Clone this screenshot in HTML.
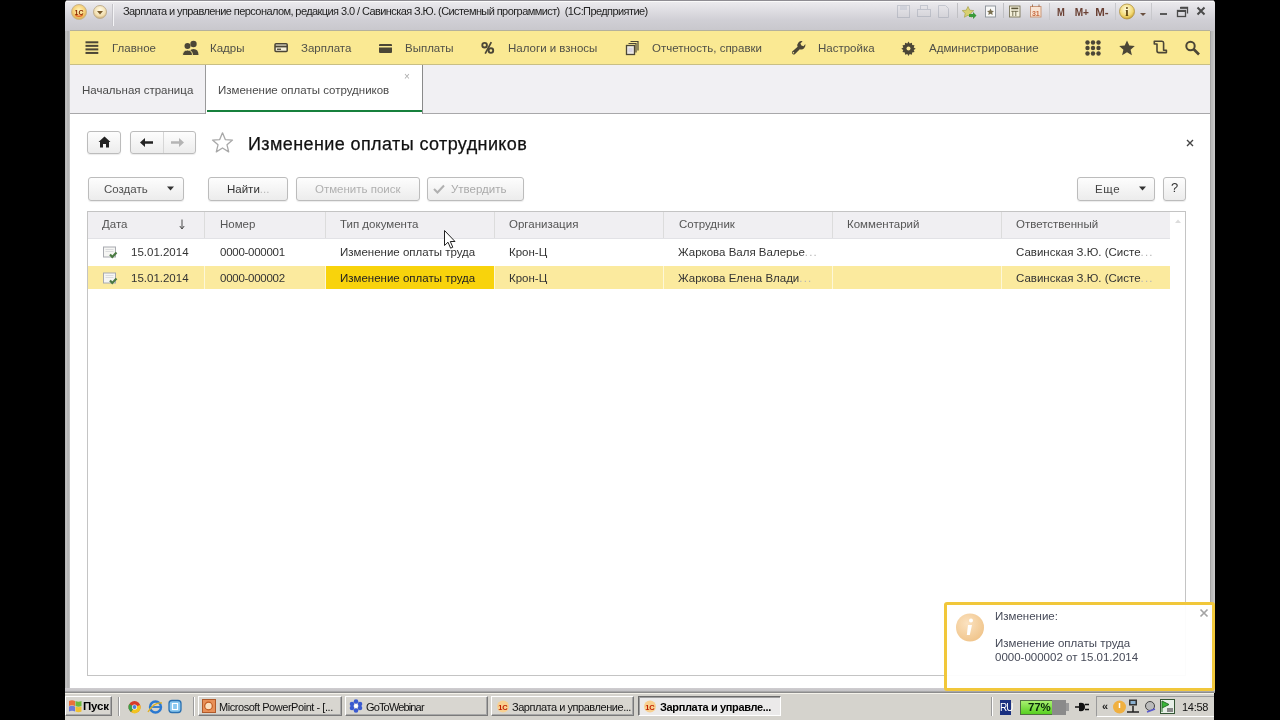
<!DOCTYPE html>
<html><head><meta charset="utf-8">
<style>
*{box-sizing:border-box;margin:0;padding:0}
.t,.xt,svg text{-webkit-font-smoothing:antialiased}
html,body{width:1280px;height:720px;overflow:hidden;background:#000;font-family:"Liberation Sans",sans-serif;color:#333}
.a{position:absolute}
.t{position:absolute;white-space:nowrap;font-size:11.5px;line-height:14px}
#win{position:absolute;left:65px;top:0;width:1150px;height:693px;background:linear-gradient(to right,#a4a4a4 0,#c8c8c8 1px,#b6b6b6 2px,#b4b4b4 4px,#d0d0d0 5px,#d0d0d0 1145px,#909090 1145px,#b8b8b8 1146px,#bcbcbc 1148px,#c8c8c8 1149px);border-radius:4px 4px 0 0}
#title{position:absolute;left:0;top:0;width:1150px;height:31px;border-radius:4px 4px 0 0;background:linear-gradient(#eeedf0 0,#e0dfe4 30%,#d0cfd5 65%,#c8c7cc 100%)}
#nav{position:absolute;left:70px;top:31px;width:1140px;height:34px;background:#fae993;border-bottom:1px solid #c9bf84}
#tabs{position:absolute;left:70px;top:65px;width:1140px;height:49px;background:#f1f0f3;border-bottom:1px solid #a8a8aa}
#content{position:absolute;left:70px;top:114px;width:1140px;height:574px;background:#fff}
#taskbar{position:absolute;left:65px;top:693px;width:1149px;height:27px;background:#d5d3cd;border-top:1px solid #f4f2ea}
.btn{position:absolute;border:1px solid #bcbcbc;border-radius:3px;background:linear-gradient(#fdfdfd,#ececec);box-shadow:0 1px 1px rgba(0,0,0,.08)}
.hdr{position:absolute;top:212px;height:27px;background:#f0eff2}
.vl{position:absolute;width:1px;background:#dcdcdc}
</style></head>
<body><div style="position:absolute;left:0;top:0;width:1280px;height:720px;will-change:transform">
<div id="win"></div>

<div id="title" class="a" style="left:65px"></div>
<div class="a" style="left:67px;top:0;width:1146px;height:1px;background:#8e8c92"></div>
<div class="a" style="left:66px;top:1px;width:1148px;height:1px;background:#fafafa"></div>
<div class="a" style="left:70px;top:30px;width:1140px;height:1px;background:#b4b19c"></div>
<svg class="a" style="left:70px;top:3px" width="18" height="18" viewBox="0 0 18 18">
 <defs><radialGradient id="g1c" cx="50%" cy="40%" r="60%"><stop offset="0" stop-color="#fff6c0"/><stop offset=".6" stop-color="#f7d27a"/><stop offset="1" stop-color="#d9a84a"/></radialGradient></defs>
 <circle cx="9" cy="9" r="7.5" fill="url(#g1c)" stroke="#c9b48a" stroke-width="1"/>
 <text x="9" y="11.5" font-family="Liberation Sans" font-weight="bold" font-size="7" text-anchor="middle" fill="#8a2a00">1С</text>
 <path d="M5.5 12.5 Q9 14 12.5 12.5" stroke="#e04010" stroke-width="1.2" fill="none"/>
</svg>
<svg class="a" style="left:92px;top:4px" width="16" height="16" viewBox="0 0 16 16">
 <defs><radialGradient id="gdd" cx="50%" cy="35%" r="65%"><stop offset="0" stop-color="#fffbe8"/><stop offset=".7" stop-color="#f2dfb0"/><stop offset="1" stop-color="#c8a870"/></radialGradient></defs>
 <circle cx="8" cy="8" r="6.5" fill="url(#gdd)" stroke="#bfae90" stroke-width="1"/>
 <path d="M5 7 L11 7 L8 10.5 Z" fill="#7a5a2a"/>
</svg>
<div class="a" style="left:112px;top:4px;width:1px;height:22px;background:#c4c3c8"></div>
<div class="a" style="left:113px;top:4px;width:1px;height:22px;background:#f4f4f6"></div>
<div class="t" style="left:123px;top:4px;font-size:11px;letter-spacing:-0.58px;color:#222">Зарплата и управление персоналом, редакция 3.0 / Савинская З.Ю. (Системный программист)&nbsp; (1С:Предприятие)</div>
<!-- right title icons -->
<svg class="a" style="left:895px;top:2px" width="320" height="20" viewBox="0 0 320 20">
 <g opacity=".35" fill="none" stroke="#8890a0" stroke-width="1">
  <rect x="2.5" y="3.5" width="12" height="12"/><rect x="5" y="4" width="7" height="4" fill="#b0b8c8" stroke="none"/>
  <rect x="22.5" y="7.5" width="13" height="7"/><rect x="25.5" y="3.5" width="7" height="4"/>
  <path d="M43.5 3.5 h7 l3 3 v9 h-10 z"/>
 </g>
 <line x1="62.5" y1="1" x2="62.5" y2="16" stroke="#c0c0c4"/>
 <path d="M73 4.5 L74.8 8.2 L78.8 8.6 L75.8 11.3 L76.6 15.3 L73 13.2 L69.4 15.3 L70.2 11.3 L67.2 8.6 L71.2 8.2 Z" fill="#d8d070" stroke="#a09a40" stroke-width=".6"/>
 <path d="M74 12 L78 12 L78 10 L81.5 13.5 L78 17 L78 15 L74 15 Z" fill="#3a9a3a"/>
 <rect x="90.5" y="4" width="10" height="11" fill="#f8f8f8" stroke="#8a9098" stroke-width=".9"/>
 <path d="M95.5 6.5 L96.6 8.7 L99 9 L97.2 10.6 L97.7 13 L95.5 11.8 L93.3 13 L93.8 10.6 L92 9 L94.4 8.7 Z" fill="#7a7050"/>
 <line x1="108.5" y1="1" x2="108.5" y2="16" stroke="#c0c0c4"/>
 <rect x="114.5" y="4" width="10.5" height="11" fill="#f4f0dc" stroke="#7a7458" stroke-width=".9"/>
 <rect x="116.3" y="5.6" width="7" height="1.6" fill="#5a5438"/>
 <path d="M116.3 9.3 h7 M117.8 9 v5 M120.8 9 v5" stroke="#6a6448" stroke-width=".9"/>
 <rect x="135.5" y="4.5" width="10.5" height="10.5" fill="#f8e4d4" stroke="#c89070" stroke-width=".9"/>
 <text x="140.8" y="13.5" font-family="Liberation Sans" font-size="7" font-weight="bold" text-anchor="middle" fill="#c86a40">31</text>
 <path d="M137.5 2.5 v2.5 M144 2.5 v2.5" stroke="#a07050" stroke-width=".9"/>
 <line x1="154.5" y1="1" x2="154.5" y2="18" stroke="#c8c8cc"/>
 <text x="162" y="13.6" font-family="Liberation Sans" font-size="11.5" font-weight="bold" textLength="7.8" lengthAdjust="spacingAndGlyphs" fill="#6a4034">M</text>
 <text x="179.7" y="13.6" font-family="Liberation Sans" font-size="11.5" font-weight="bold" textLength="14.3" lengthAdjust="spacingAndGlyphs" fill="#6a4034">M+</text>
 <text x="200.3" y="13.6" font-family="Liberation Sans" font-size="11.5" font-weight="bold" textLength="13.4" lengthAdjust="spacingAndGlyphs" fill="#6a4034">M-</text>
 <line x1="220.5" y1="1" x2="220.5" y2="18" stroke="#c8c8cc"/>
 <defs><radialGradient id="gi" cx="45%" cy="35%" r="65%"><stop offset="0" stop-color="#fffce0"/><stop offset=".7" stop-color="#f2d870"/><stop offset="1" stop-color="#c8a030"/></radialGradient></defs>
 <circle cx="232" cy="9.5" r="7.5" fill="url(#gi)" stroke="#b09040" stroke-width=".8"/>
 <text x="232" y="14" font-family="Liberation Serif" font-size="12" font-weight="bold" text-anchor="middle" fill="#5a4010">i</text>
 <path d="M245 11 h6 l-3 3 z" fill="#6a5040"/>
 <line x1="256.5" y1="1" x2="256.5" y2="18" stroke="#c8c8cc"/>
 <rect x="265" y="11" width="7" height="2" fill="#5a5a5a"/>
 <rect x="282.5" y="8.5" width="8" height="6" fill="none" stroke="#4a4a4a" stroke-width="1.3"/><rect x="282" y="8" width="9" height="2" fill="#4a4a4a"/>
 <path d="M285.5 5.5 h7 v6" fill="none" stroke="#4a4a4a" stroke-width="1.3"/><rect x="285" y="5" width="8" height="1.8" fill="#4a4a4a"/>
 <path d="M302.5 5.5 L309.5 12.5 M309.5 5.5 L302.5 12.5" stroke="#4a4a4a" stroke-width="2"/>
</svg>

<div id="nav"></div>
<svg class="a" style="left:70px;top:31px" width="1140" height="34" viewBox="70 31 1140 34">
 <g fill="#4b4636">
  <rect x="85.5" y="41.3" width="12.8" height="2"/><rect x="85.5" y="44.85" width="12.8" height="2"/><rect x="85.5" y="48.4" width="12.8" height="2"/><rect x="85.5" y="51.95" width="12.8" height="2"/>
  <circle cx="193.5" cy="44" r="3.2"/><path d="M188.5 55 q0 -6 5 -6 q5 0 5 6 z"/>
  <circle cx="187.5" cy="46" r="3"/><path d="M182.5 55.5 q0 -5.5 5 -5.5 q5 0 5 5.5 z" stroke="#fae993" stroke-width="1"/>
  <rect x="275" y="43.8" width="12.2" height="7.8" rx="1" fill="#f4efd8" stroke="#4b4636" stroke-width="1.5"/><rect x="275" y="45.6" width="12.2" height="1.8"/><rect x="277" y="48.6" width="4" height="1.3"/>
  <rect x="379" y="44" width="13" height="9" rx="1"/><rect x="379" y="46" width="13" height="1.5" fill="#fae993"/>
  <circle cx="484.6" cy="45.2" r="2.3" fill="none" stroke="#4b4636" stroke-width="1.9"/><circle cx="490.9" cy="50.6" r="2.3" fill="none" stroke="#4b4636" stroke-width="1.9"/><path d="M491.3 42.2 L485.2 53.6" stroke="#4b4636" stroke-width="1.7"/>
  <rect x="626.5" y="45.5" width="8" height="9" fill="#ebe8e2" stroke="#4b4636" stroke-width="1.3"/><path d="M628.5 43.5 h7.5 v9 M630.5 41.5 h7.5 v9" fill="none" stroke="#4b4636" stroke-width="1.2"/><rect x="628.5" y="48" width="4" height="4" fill="#d8d4e0"/>
  <path d="M792 51.8 L797.6 46.8 A4.3 4.3 0 0 1 802.6 41.2 L800.4 43.6 L801.4 45.6 L803.6 46.3 L805.3 44 A4.3 4.3 0 0 1 799.8 49.2 L794.8 54.2 A2 2 0 0 1 792 51.8 Z"/><circle cx="793.4" cy="52.8" r=".8" fill="#fae993"/>
  <path d="M908.5 41.5 l1.2 2 2.2 -.8 .3 2.3 2.3 .3 -.8 2.2 2 1.2 -2 1.2 .8 2.2 -2.3 .3 -.3 2.3 -2.2 -.8 -1.2 2 -1.2 -2 -2.2 .8 -.3 -2.3 -2.3 -.3 .8 -2.2 -2 -1.2 2 -1.2 -.8 -2.2 2.3 -.3 .3 -2.3 2.2 .8 z"/>
  <circle cx="908.5" cy="48.5" r="2" fill="#fae993"/>
  <g><circle cx="1087.5" cy="42.5" r="2.2"/><circle cx="1093" cy="42.5" r="2.2"/><circle cx="1098.5" cy="42.5" r="2.2"/>
  <circle cx="1087.5" cy="48" r="2.2"/><circle cx="1093" cy="48" r="2.2"/><circle cx="1098.5" cy="48" r="2.2"/>
  <circle cx="1087.5" cy="53.5" r="2.2"/><circle cx="1093" cy="53.5" r="2.2"/><circle cx="1098.5" cy="53.5" r="2.2"/></g>
  <path d="M1127 40.5 L1129.3 45.6 L1134.8 46.1 L1130.6 49.7 L1131.9 55.2 L1127 52.3 L1122.1 55.2 L1123.4 49.7 L1119.2 46.1 L1124.7 45.6 Z"/>
  <path d="M1157 44 H1154.3 V41.3 H1162 Q1163.6 41.3 1163.6 43 V50.2 H1166.4 V52.6 H1158.8 Q1157 52.6 1157 50.8 Z" fill="none" stroke="#4b4636" stroke-width="1.6" stroke-linejoin="round"/>
  <circle cx="1190.5" cy="46" r="4.2" fill="none" stroke="#4b4636" stroke-width="2"/><path d="M1193.5 49 L1199 54.5" stroke="#4b4636" stroke-width="2.6"/>
 </g>
</svg>
<div class="t" style="left:112px;top:41px;color:#505048">Главное</div>
<div class="t" style="left:210px;top:41px;color:#505048">Кадры</div>
<div class="t" style="left:301px;top:41px;color:#505048">Зарплата</div>
<div class="t" style="left:405px;top:41px;color:#505048">Выплаты</div>
<div class="t" style="left:508px;top:41px;color:#505048">Налоги и взносы</div>
<div class="t" style="left:652px;top:41px;color:#505048">Отчетность, справки</div>
<div class="t" style="left:818px;top:41px;color:#505048">Настройка</div>
<div class="t" style="left:929px;top:41px;color:#505048">Администрирование</div>

<div id="tabs"></div>
<div class="a" style="left:205px;top:65px;width:218px;height:49px;background:#fff;border-left:1px solid #9a9a9a;border-right:1px solid #8a8a8a"></div>
<div class="a" style="left:207px;top:110px;width:215px;height:2px;background:#17803c"></div>
<div class="t" style="left:82px;top:83px;color:#4a4a4a">Начальная страница</div>
<div class="t" style="left:218px;top:83px;color:#4a4a4a">Изменение оплаты сотрудников</div>
<div class="t" style="left:404px;top:70px;font-size:10px;color:#aaa">×</div>

<div id="content"></div>
<!-- home / nav buttons -->
<div class="btn" style="left:87px;top:131px;width:34px;height:23px"></div>
<div class="btn" style="left:130px;top:131px;width:66px;height:23px"></div>
<div class="a" style="left:163px;top:132px;width:1px;height:21px;background:#d6d6d6"></div>
<svg class="a" style="left:88px;top:131px" width="110" height="24" viewBox="88 131 110 24">
 <path d="M104.5 136.5 L110.5 142 L109 142 L109 147.5 L106 147.5 L106 144 L103 144 L103 147.5 L100 147.5 L100 142 L98.5 142 Z" fill="#222"/>
 <path d="M140 142.5 L145 138 L145 141.2 L153 141.2 L153 143.8 L145 143.8 L145 147 Z" fill="#222"/>
 <path d="M184 142.5 L179 138 L179 141.2 L171 141.2 L171 143.8 L179 143.8 L179 147 Z" fill="#b4b4b4"/>
</svg>
<svg class="a" style="left:210px;top:131px" width="26" height="24" viewBox="0 0 26 24">
 <path d="M12.5 1.8 L15.3 8.6 L22.5 9.1 L17 13.8 L18.7 20.9 L12.5 17 L6.3 20.9 L8 13.8 L2.5 9.1 L9.7 8.6 Z" fill="none" stroke="#a8a8a8" stroke-width="1.3" stroke-linejoin="round"/>
</svg>
<div class="t" style="left:248px;top:133px;font-size:18px;line-height:22px;letter-spacing:0.4px;color:#111;-webkit-text-stroke:0.25px #111">Изменение оплаты сотрудников</div>
<svg class="a" style="left:1185px;top:138px" width="10" height="10" viewBox="0 0 10 10"><path d="M2 2 L8 8 M8 2 L2 8" stroke="#444" stroke-width="1.4"/></svg>
<!-- toolbar -->
<div class="btn" style="left:88px;top:177px;width:96px;height:24px"></div>
<div class="t" style="left:104px;top:182px;color:#505050">Создать</div>
<svg class="a" style="left:166px;top:186px" width="9" height="6"><path d="M1 0.5 L8 0.5 L4.5 4.5 Z" fill="#333"/></svg>
<div class="btn" style="left:208px;top:177px;width:80px;height:24px"></div>
<div class="t" style="left:227px;top:182px;color:#333">Найти<span style="color:#b8b8b8">...</span></div>
<div class="btn" style="left:296px;top:177px;width:124px;height:24px"></div>
<div class="t" style="left:315px;top:182px;color:#b0b0b0">Отменить поиск</div>
<div class="btn" style="left:427px;top:177px;width:97px;height:24px"></div>
<svg class="a" style="left:433px;top:184px" width="12" height="10"><path d="M1 5 L4.5 8.5 L11 1.5" fill="none" stroke="#b0b0b0" stroke-width="2"/></svg>
<div class="t" style="left:451px;top:182px;color:#aaa">Утвердить</div>
<div class="btn" style="left:1077px;top:177px;width:78px;height:24px"></div>
<div class="t" style="left:1095px;top:182px;color:#444;letter-spacing:.6px">Еще</div>
<svg class="a" style="left:1138px;top:186px" width="9" height="6"><path d="M1 0.5 L8 0.5 L4.5 4.5 Z" fill="#333"/></svg>
<div class="btn" style="left:1163px;top:177px;width:23px;height:24px"></div>
<div class="t" style="left:1171px;top:181px;font-size:13px;color:#333">?</div>
<!-- table -->
<div class="a" style="left:87px;top:211px;width:1099px;height:465px;border:1px solid #c4c4c4;background:#fff"></div>
<div class="a" style="left:88px;top:212px;width:1082px;height:26px;background:#f0eff2"></div>
<div class="a" style="left:88px;top:238px;width:1082px;height:1px;background:#e2e2e6"></div>
<div class="a" style="left:88px;top:266px;width:1082px;height:23px;background:#fbea9e"></div>
<div class="a" style="left:326px;top:266px;width:168px;height:23px;background:#f8d30c"></div>
<div class="vl" style="left:204px;top:212px;height:26px"></div>
<div class="vl" style="left:325px;top:212px;height:26px"></div>
<div class="vl" style="left:494px;top:212px;height:26px"></div>
<div class="vl" style="left:663px;top:212px;height:26px"></div>
<div class="vl" style="left:832px;top:212px;height:26px"></div>
<div class="vl" style="left:1001px;top:212px;height:26px"></div>
<div class="vl" style="left:204px;top:239px;height:50px;background:rgba(255,255,255,.6)"></div>
<div class="vl" style="left:325px;top:239px;height:50px;background:rgba(255,255,255,.6)"></div>
<div class="vl" style="left:494px;top:239px;height:50px;background:rgba(255,255,255,.6)"></div>
<div class="vl" style="left:663px;top:239px;height:50px;background:rgba(255,255,255,.6)"></div>
<div class="vl" style="left:832px;top:239px;height:50px;background:rgba(255,255,255,.6)"></div>
<div class="vl" style="left:1001px;top:239px;height:50px;background:rgba(255,255,255,.6)"></div>
<div class="t" style="left:102px;top:217px;color:#555">Дата</div>
<svg class="a" style="left:178px;top:219px" width="8" height="11" viewBox="0 0 8 11"><path d="M4 0.5 V9.5" stroke="#4a4a4a" stroke-width="1"/><path d="M1.8 7 L4 10 L6.2 7" fill="none" stroke="#4a4a4a" stroke-width="1"/></svg>
<div class="t" style="left:220px;top:217px;color:#555">Номер</div>
<div class="t" style="left:340px;top:217px;color:#555">Тип документа</div>
<div class="t" style="left:509px;top:217px;color:#555">Организация</div>
<div class="t" style="left:679px;top:217px;color:#555">Сотрудник</div>
<div class="t" style="left:847px;top:217px;color:#555">Комментарий</div>
<div class="t" style="left:1016px;top:217px;color:#555">Ответственный</div>
<svg class="a" style="left:101px;top:245px" width="18" height="40" viewBox="0 0 18 40">
 <g id="dic"><rect x="2.5" y="2" width="12" height="10" fill="#f6f6f4" stroke="#a8aab0" stroke-width="1"/><path d="M4.5 4.5 h8 M4.5 6.5 h8" stroke="#d4d6d8" stroke-width=".8"/>
 <path d="M9 9.5 L11.3 12 L15.5 7.5" fill="none" stroke="#4a7a42" stroke-width="2.2"/></g>
 <use href="#dic" y="26"/>
</svg>
<div class="t" style="left:131px;top:245px;color:#333">15.01.2014</div>
<div class="t" style="left:220px;top:245px;color:#333;letter-spacing:-0.27px">0000-000001</div>
<div class="t" style="left:340px;top:245px;color:#333">Изменение оплаты труда</div>
<div class="t" style="left:509px;top:245px;color:#333">Крон-Ц</div>
<div class="t" style="left:678px;top:245px;color:#333">Жаркова Валя Валерье<span style="color:#b4b4b4;letter-spacing:1.2px">...</span></div>
<div class="t" style="left:1016px;top:245px;color:#333">Савинская З.Ю. (Систе<span style="color:#b4b4b4;letter-spacing:1.2px">...</span></div>
<div class="t" style="left:131px;top:271px;color:#333">15.01.2014</div>
<div class="t" style="left:220px;top:271px;color:#333;letter-spacing:-0.27px">0000-000002</div>
<div class="t" style="left:340px;top:271px;color:#222">Изменение оплаты труда</div>
<div class="t" style="left:509px;top:271px;color:#333">Крон-Ц</div>
<div class="t" style="left:678px;top:271px;color:#333">Жаркова Елена Влади<span style="color:#b4b4b4;letter-spacing:1.2px">...</span></div>
<div class="t" style="left:1016px;top:271px;color:#333">Савинская З.Ю. (Систе<span style="color:#b4b4b4;letter-spacing:1.2px">...</span></div>
<svg class="a" style="left:1174px;top:218px" width="8" height="6"><path d="M1 5 L4 1.5 L7 5 Z" fill="#dcdcdc"/></svg>
<!-- cursor -->
<svg class="a" style="left:444px;top:230px" width="13" height="20" viewBox="0 0 13 20">
 <path d="M0.5 0.5 L0.5 15.5 L4 12.2 L6.6 18.2 L8.8 17.2 L6.3 11.5 L11 11.5 Z" fill="#fff" stroke="#222" stroke-width="1" stroke-linejoin="round"/>
</svg>

<div id="taskbar"></div>
<div class="a" style="left:65px;top:688px;width:1150px;height:5px;background:linear-gradient(#cfcdd0 0,#c4c3c6 60%,#8c8c8c 80%,#8c8c8c 100%)"></div>
<div class="a" style="left:65px;top:693px;width:1149px;height:1px;background:#f4f2ea"></div>
<style>
.xb{position:absolute;top:696px;height:20px;background:#d8d6d0;border-top:1px solid #fff;border-left:1px solid #fff;border-right:1px solid #7a7a7a;border-bottom:1px solid #7a7a7a;box-shadow:inset -1px -1px 0 #a8a8a8}
.xt{position:absolute;top:701px;font-size:11px;line-height:12px;letter-spacing:-0.45px;color:#111;white-space:nowrap}
</style>
<div class="xb" style="left:65px;width:47px"></div>
<svg class="a" style="left:67px;top:698px" width="16" height="16" viewBox="0 0 16 16">
 <path d="M2 3 q3 -1.5 6 0 v5 q-3 -1.5 -6 0z" fill="#e8703a"/><path d="M8.5 3 q3 1.5 6 0 v5 q-3 1.5 -6 0z" fill="#6ab83a"/>
 <path d="M2 8.5 q3 -1.5 6 0 v5 q-3 -1.5 -6 0z" fill="#6a7ad8"/><path d="M8.5 8.5 q3 1.5 6 0 v5 q-3 1.5 -6 0z" fill="#f0c030"/>
</svg>
<div class="xt" style="left:83px;top:700px;font-weight:bold;font-size:11.5px;letter-spacing:-0.2px;color:#000">Пуск</div>
<div class="a" style="left:118px;top:697px;width:1px;height:19px;background:#9a9a9a"></div>
<div class="a" style="left:119px;top:697px;width:1px;height:19px;background:#fff"></div>
<svg class="a" style="left:126px;top:698px" width="60" height="18" viewBox="126 698 60 18">
 <circle cx="134.5" cy="707" r="6" fill="#d83a2a"/><path d="M134.5 707 L140.2 705 A6 6 0 0 1 131 712 Z" fill="#f2c420"/><path d="M134.5 707 L131 712 A6 6 0 0 1 129.2 704 Z" fill="#3aa048"/>
 <circle cx="134.5" cy="707" r="2.6" fill="#fff"/><circle cx="134.5" cy="707" r="2" fill="#4a80d8"/>
 <circle cx="155.5" cy="707" r="5.5" fill="none" stroke="#2a78d0" stroke-width="2.4"/><path d="M150.5 707 h10" stroke="#2a78d0" stroke-width="1.8"/><path d="M148 712 q6 -10 14 -9" fill="none" stroke="#e0b020" stroke-width="1.3"/>
 <rect x="169" y="700.5" width="12" height="12" rx="3" fill="#8ac8f0" stroke="#2a70b0" stroke-width="1.3"/><path d="M172.5 703.5 h5 v6 h-5 z" fill="none" stroke="#fff" stroke-width="1.2"/>
</svg>
<div class="a" style="left:193px;top:697px;width:1px;height:19px;background:#9a9a9a"></div>
<div class="a" style="left:194px;top:697px;width:1px;height:19px;background:#fff"></div>
<div class="xb" style="left:198px;width:144px"></div>
<svg class="a" style="left:202px;top:699px" width="14" height="14" viewBox="0 0 14 14"><rect x="0.5" y="0.5" width="13" height="13" fill="#e89058" stroke="#b05a2a"/><circle cx="6.5" cy="7" r="3.8" fill="#fbe0c0" stroke="#c05a20" stroke-width="1.2"/></svg>
<div class="xt" style="left:219px">Microsoft PowerPoint - [...</div>
<div class="xb" style="left:345px;width:143px"></div>
<svg class="a" style="left:349px;top:699px" width="14" height="14" viewBox="0 0 14 14"><g fill="#3a5ad0"><circle cx="7" cy="2.5" r="2.3"/><circle cx="7" cy="11.5" r="2.3"/><circle cx="3" cy="5" r="2.3"/><circle cx="11" cy="5" r="2.3"/><circle cx="3" cy="9" r="2.3"/><circle cx="11" cy="9" r="2.3"/></g><circle cx="7" cy="7" r="2" fill="#fff"/></svg>
<div class="xt" style="left:366px;letter-spacing:-0.85px">GoToWebinar</div>
<div class="xb" style="left:491px;width:143px"></div>
<svg class="a" style="left:495px;top:700px" width="16" height="13" viewBox="0 0 16 13"><circle cx="8" cy="6.5" r="6" fill="#f8d090"/><text x="8" y="9.5" font-family="Liberation Sans" font-weight="bold" font-size="7.5" text-anchor="middle" fill="#c02000">1С</text></svg>
<div class="xt" style="left:512px">Зарплата и управление...</div>
<div class="a" style="left:638px;top:696px;width:143px;height:20px;background:#ebeaea;border-top:1px solid #6a6a6a;border-left:1px solid #6a6a6a;border-right:1px solid #fff;border-bottom:1px solid #fff;box-shadow:inset 1px 1px 0 #a0a0a0"></div>
<svg class="a" style="left:642px;top:700px" width="16" height="13" viewBox="0 0 16 13"><circle cx="8" cy="6.5" r="6" fill="#f8d090"/><text x="8" y="9.5" font-family="Liberation Sans" font-weight="bold" font-size="7.5" text-anchor="middle" fill="#c02000">1С</text></svg>
<div class="xt" style="left:660px;font-weight:bold;letter-spacing:-0.35px;color:#000">Зарплата и управле...</div>
<!-- tray -->
<div class="a" style="left:991px;top:697px;width:1px;height:19px;background:#9a9a9a"></div>
<div class="a" style="left:992px;top:697px;width:1px;height:19px;background:#fff"></div>
<div class="a" style="left:1000px;top:700px;width:11px;height:15px;background:#1a3080"></div>
<div class="xt" style="left:1000px;top:702px;font-size:10px;letter-spacing:-1px;color:#fff">RU</div>
<div class="a" style="left:1020px;top:700px;width:33px;height:15px;background:linear-gradient(#a8f070,#58d020);border:1px solid #507040"></div>
<div class="a" style="left:1052px;top:700px;width:14px;height:15px;background:#8a8a8a"></div>
<div class="a" style="left:1066px;top:703px;width:3px;height:8px;background:#9a9a9a"></div>
<div class="xt" style="left:1028px;top:701px;font-weight:bold;font-size:11.5px;letter-spacing:-0.2px;color:#0a2a0a">77%</div>
<svg class="a" style="left:1074px;top:700px" width="16" height="14" viewBox="0 0 16 14"><path d="M1 7 h4 M11 4.5 h4 M11 9.5 h4" stroke="#111" stroke-width="1.6"/><path d="M5 3 q6 -1 6 4 q0 5 -6 4 z" fill="#111"/></svg>
<div class="a" style="left:1096px;top:696px;width:118px;height:21px;border-top:1px solid #9a9a9a;border-left:1px solid #9a9a9a;border-bottom:1px solid #fff;background:#d5d3cd"></div>
<div class="xt" style="left:1102px;top:700px;font-weight:bold;color:#222">«</div>
<svg class="a" style="left:1112px;top:698px" width="70" height="17" viewBox="1112 698 70 17">
 <circle cx="1119.5" cy="707" r="6.5" fill="#f0b040"/><path d="M1119.5 703 v5" stroke="#fff" stroke-width="1.5"/>
 <rect x="1129" y="699.5" width="8" height="6" fill="#333"/><rect x="1130.5" y="701" width="5" height="3" fill="#8ab0d0"/><path d="M1127 712 h12 M1133 706 v6" stroke="#222" stroke-width="1.5"/>
 <circle cx="1150" cy="706" r="4.5" fill="#bbb" stroke="#444"/><path d="M1147 712 l8 -3" stroke="#5a5ad0" stroke-width="1.5"/>
 <rect x="1160.5" y="699.5" width="14" height="14" fill="#e8f0e8" stroke="#335533"/><path d="M1162 701 v11 M1162 701 l7 3.5 l-7 3.5" fill="#38b838" stroke="#2a702a"/><rect x="1167" y="708" width="6" height="4" fill="#888"/>
</svg>
<div class="xt" style="left:1182px;color:#111;letter-spacing:-0.3px">14:58</div>


<!-- popup -->
<div class="a" style="left:944px;top:602px;width:271px;height:89px;border:3px solid #f1c73a;border-radius:3px;background:rgba(255,255,255,.94)"></div>
<svg class="a" style="left:955px;top:613px" width="30" height="30" viewBox="0 0 30 30">
 <defs><radialGradient id="gpi" cx="40%" cy="35%" r="70%"><stop offset="0" stop-color="#fbe2c0"/><stop offset="1" stop-color="#f0c48a"/></radialGradient></defs>
 <circle cx="15" cy="14.5" r="14" fill="url(#gpi)"/>
 <circle cx="16" cy="7.5" r="2" fill="#fff"/><path d="M13 12 h4 l-2.2 10 h-3 z" fill="#fff"/>
</svg>
<div class="t" style="left:995px;top:609px;font-size:11.5px;color:#464a58">Изменение:</div>
<div class="t" style="left:995px;top:636px;font-size:11.5px;color:#464a58">Изменение оплаты труда</div>
<div class="t" style="left:995px;top:650px;font-size:11.5px;color:#464a58">0000-000002 от 15.01.2014</div>
<svg class="a" style="left:1199px;top:608px" width="10" height="10"><path d="M1.5 1.5 L8.5 8.5 M8.5 1.5 L1.5 8.5" stroke="#a4a4a4" stroke-width="1.7"/></svg>
</div></body></html>
